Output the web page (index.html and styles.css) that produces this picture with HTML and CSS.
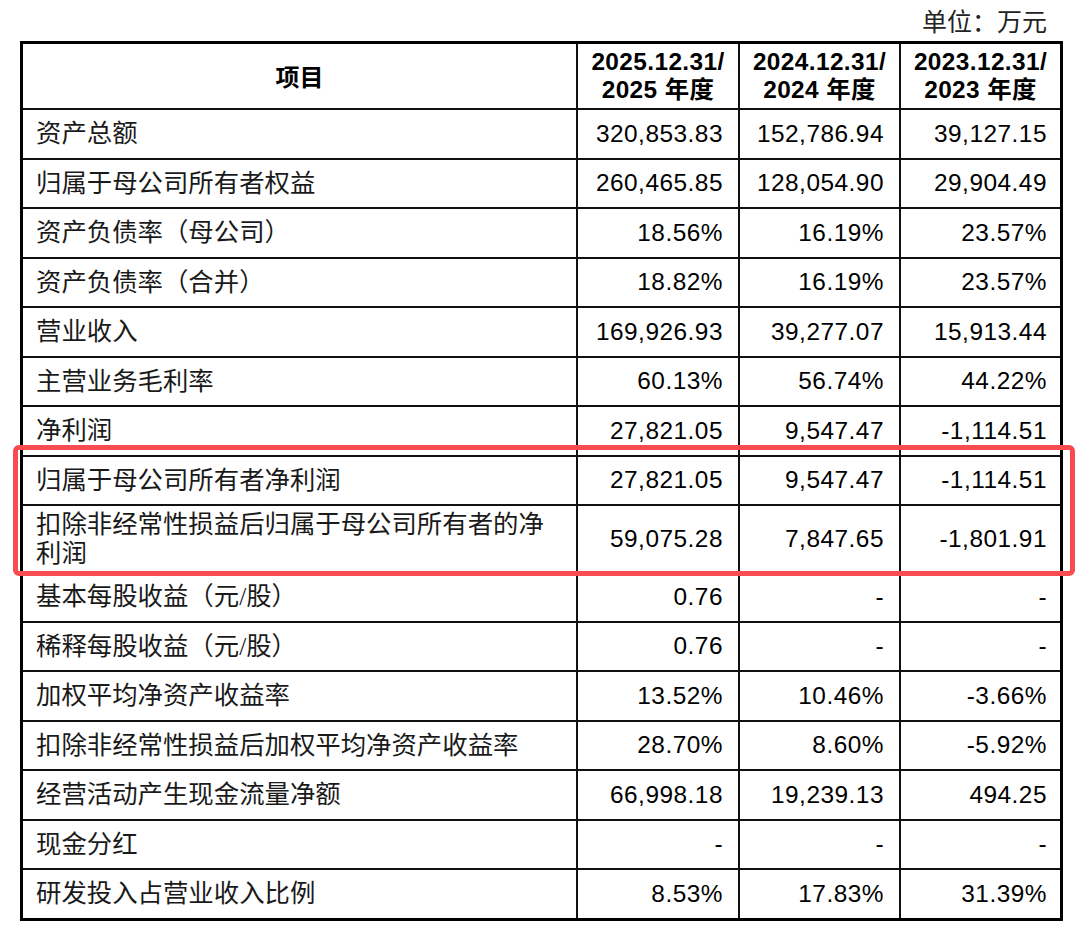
FILE: index.html
```html
<!DOCTYPE html>
<html lang="zh-CN">
<head>
<meta charset="utf-8">
<title>主要财务数据</title>
<link rel="stylesheet" href="styles.css">
</head>
<body>
<div class="page">
  <div class="unit">单位：万元</div>
  <table class="fin">
    <colgroup>
      <col class="c1"><col class="c2"><col class="c3"><col class="c4">
    </colgroup>
    <thead>
      <tr class="head">
        <th class="item">项目</th>
        <th><span class="l">2025.12.31/</span><span class="l">2025 年度</span></th>
        <th><span class="l">2024.12.31/</span><span class="l">2024 年度</span></th>
        <th><span class="l">2023.12.31/</span><span class="l">2023 年度</span></th>
      </tr>
    </thead>
    <tbody>
      <tr><td>资产总额</td><td>320,853.83</td><td>152,786.94</td><td>39,127.15</td></tr>
      <tr><td>归属于母公司所有者权益</td><td>260,465.85</td><td>128,054.90</td><td>29,904.49</td></tr>
      <tr><td>资产负债率（母公司）</td><td>18.56%</td><td>16.19%</td><td>23.57%</td></tr>
      <tr><td>资产负债率（合并）</td><td>18.82%</td><td>16.19%</td><td>23.57%</td></tr>
      <tr><td>营业收入</td><td>169,926.93</td><td>39,277.07</td><td>15,913.44</td></tr>
      <tr><td>主营业务毛利率</td><td>60.13%</td><td>56.74%</td><td>44.22%</td></tr>
      <tr><td>净利润</td><td>27,821.05</td><td>9,547.47</td><td>-1,114.51</td></tr>
      <tr><td>归属于母公司所有者净利润</td><td>27,821.05</td><td>9,547.47</td><td>-1,114.51</td></tr>
      <tr class="double"><td>扣除非经常性损益后归属于母公司所有者的净利润</td><td>59,075.28</td><td>7,847.65</td><td>-1,801.91</td></tr>
      <tr><td>基本每股收益（元/股）</td><td>0.76</td><td>-</td><td>-</td></tr>
      <tr><td>稀释每股收益（元/股）</td><td>0.76</td><td>-</td><td>-</td></tr>
      <tr><td>加权平均净资产收益率</td><td>13.52%</td><td>10.46%</td><td>-3.66%</td></tr>
      <tr><td>扣除非经常性损益后加权平均净资产收益率</td><td>28.70%</td><td>8.60%</td><td>-5.92%</td></tr>
      <tr><td>经营活动产生现金流量净额</td><td>66,998.18</td><td>19,239.13</td><td>494.25</td></tr>
      <tr><td>现金分红</td><td>-</td><td>-</td><td>-</td></tr>
      <tr class="last"><td>研发投入占营业收入比例</td><td>8.53%</td><td>17.83%</td><td>31.39%</td></tr>
    </tbody>
  </table>
  <div class="highlight"></div>
</div>
</body>
</html>
```

FILE: styles.css
```css
html, body {
  margin: 0;
  padding: 0;
  background: #ffffff;
}

.page {
  position: relative;
  width: 1080px;
  height: 935px;
  color: #111111;
}

.unit {
  width: 1027px;
  margin-left: 20px;
  padding-top: 5px;
  height: 36px;
  line-height: 36px;
  text-align: right;
  font-family: "Liberation Serif", "Noto Sans CJK SC", serif;
  font-size: 25px;
  color: #222222;
}

.fin {
  margin-left: 20px;
  width: 1043px;
  box-sizing: border-box;
  table-layout: fixed;
  border-collapse: separate;
  border-spacing: 0;
  border: 3px solid #000000;
}

.c1 { width: 555px; }
.c2 { width: 162px; }
.c3 { width: 161px; }
.c4 { width: 159px; }

.fin th,
.fin td {
  box-sizing: border-box;
  padding: 0;
  border-right: 2px solid #111111;
  border-bottom: 2px solid #111111;
  vertical-align: middle;
}

.fin th:last-child,
.fin td:last-child {
  border-right: none;
}

.fin tr.last td {
  border-bottom: none;
}

.head th {
  height: 66px;
  text-align: center;
  font-family: "Liberation Sans", "Noto Sans CJK SC", sans-serif;
  font-weight: bold;
  font-size: 24.4px;
  letter-spacing: 0.4px;
  line-height: 28px;
  color: #000000;
}

.head th .l {
  display: block;
}

.head th.item {
  font-family: "Noto Sans CJK SC", sans-serif;
  font-size: 24px;
  letter-spacing: 0;
}

.fin td {
  height: 49.5px;
  text-align: right;
  padding-right: 15px;
  font-family: "Liberation Sans", Arial, sans-serif;
  font-size: 24.4px;
  letter-spacing: 0.5px;
  line-height: 28px;
  color: #000000;
}

.fin td:last-child {
  padding-right: 13px;
}

.fin td:first-child {
  text-align: left;
  padding-left: 13px;
  padding-right: 13px;
  font-family: "Liberation Serif", "Noto Sans CJK SC", serif;
  font-size: 25.4px;
  letter-spacing: 0;
  line-height: 29px;
  color: #1a1a1a;
}

.fin tr.double td {
  height: 67px;
}

.fin tr.last td {
  height: 47.5px;
}

.highlight {
  position: absolute;
  left: 13px;
  top: 445px;
  width: 1062px;
  height: 131px;
  box-sizing: border-box;
  border: 5px solid #f94c52;
  border-radius: 6px;
  pointer-events: none;
}
```
